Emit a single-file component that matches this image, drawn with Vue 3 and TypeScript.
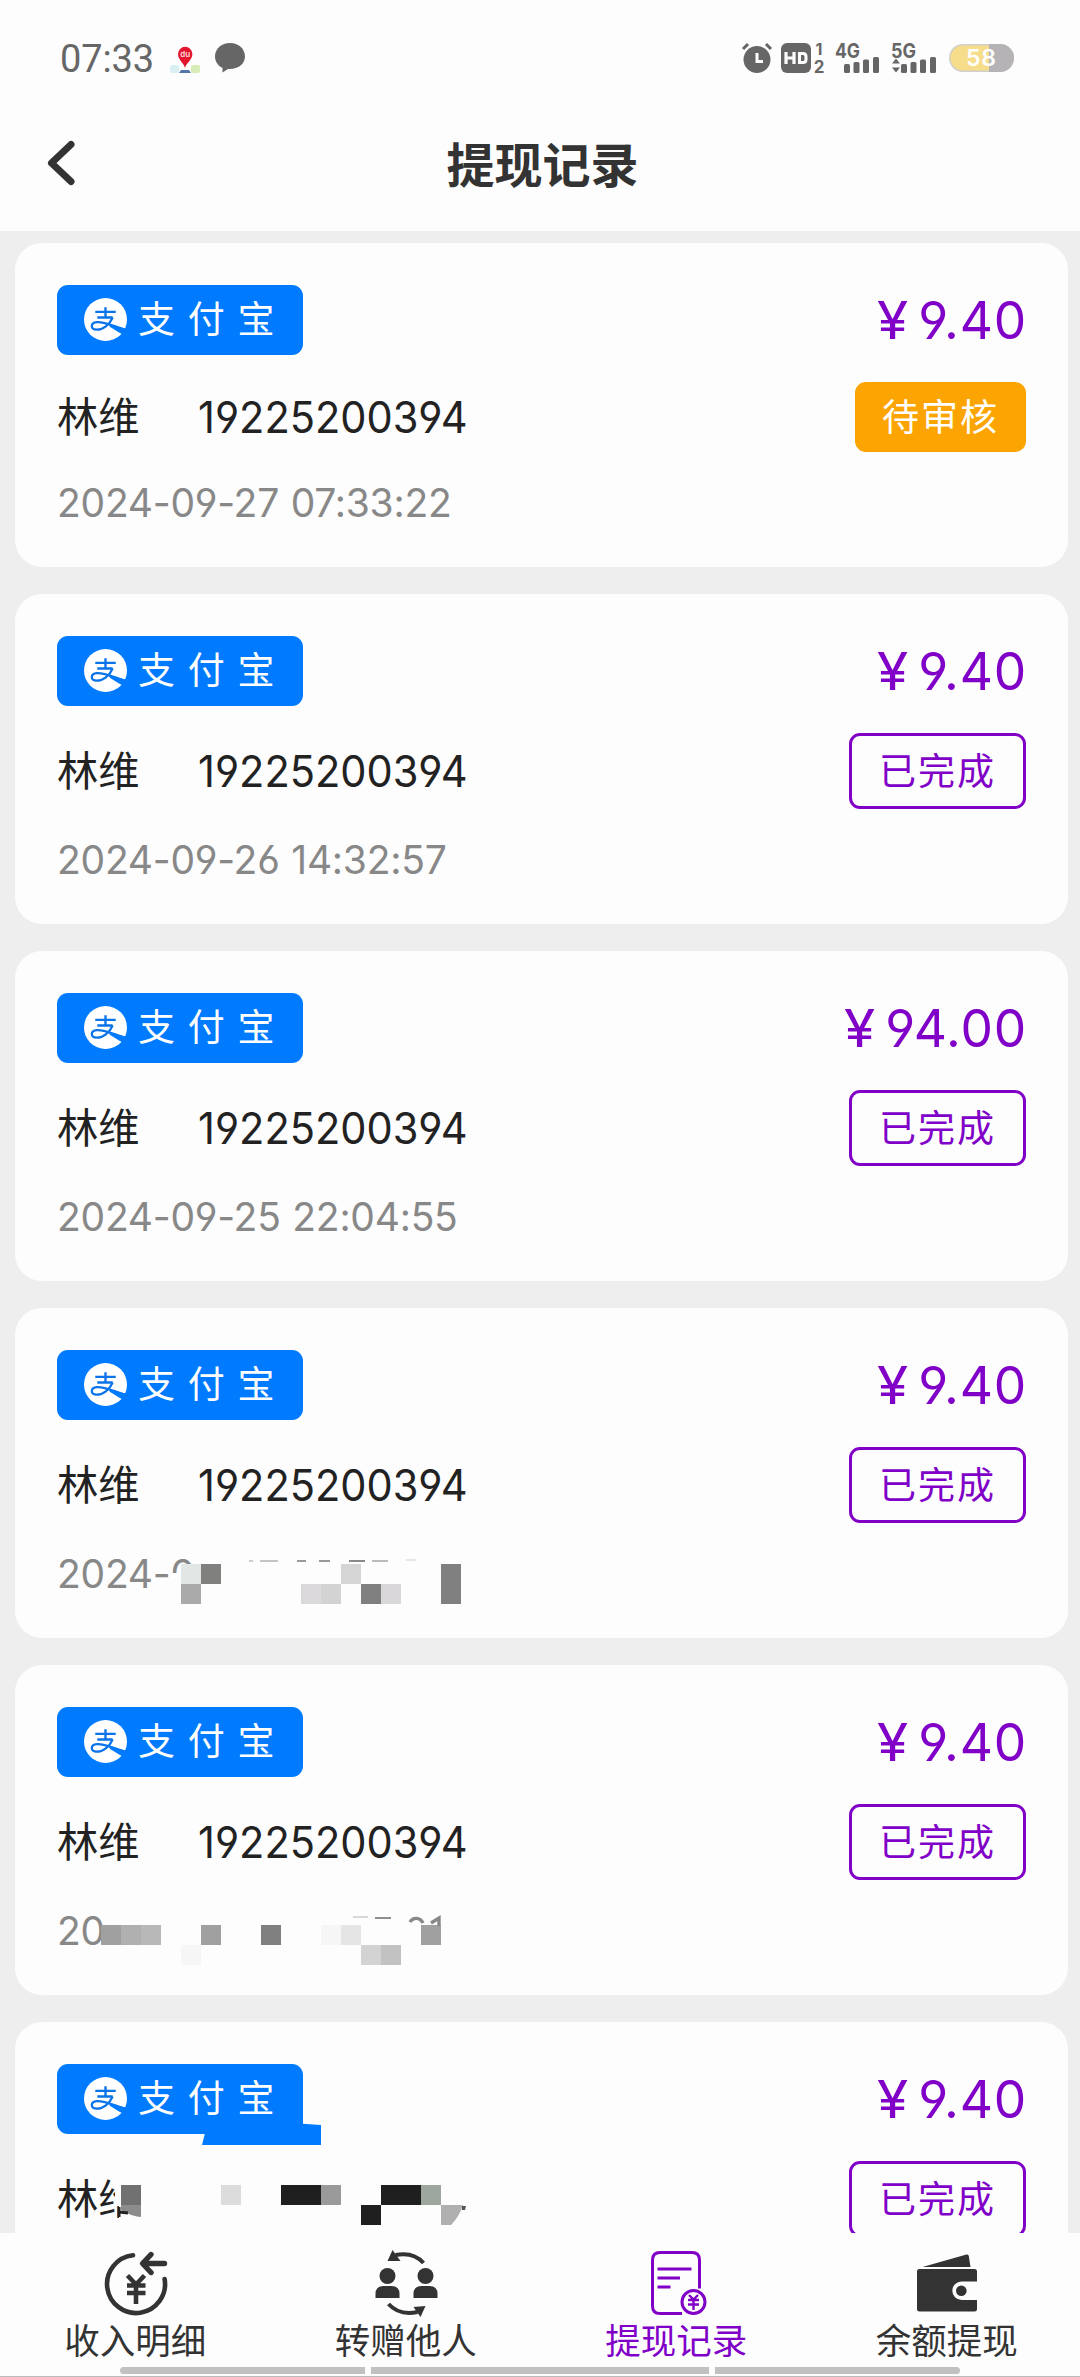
<script setup lang="ts">
type Block = { x: number; y: number; w?: number; h?: number; c: string }
interface RecordItem {
  id: number
  name: string
  account: string
  time: string
  amount: string
  done: boolean
}

const records: RecordItem[] = [
  { id: 1, name: '林维', account: '19225200394', time: '2024-09-27 07:33:22', amount: '9.40', done: false },
  { id: 2, name: '林维', account: '19225200394', time: '2024-09-26 14:32:57', amount: '9.40', done: true },
  { id: 3, name: '林维', account: '19225200394', time: '2024-09-25 22:04:55', amount: '94.00', done: true },
  { id: 4, name: '林维', account: '19225200394', time: '2024-0', amount: '9.40', done: true },
  { id: 5, name: '林维', account: '19225200394', time: '20', amount: '9.40', done: true },
  { id: 6, name: '林维', account: '', time: '', amount: '9.40', done: true },
]

// Privacy mosaics, in card coordinates
const mosaics: Record<number, Block[]> = {
  4: [
    { x: 156, y: 264, w: 40, h: 30, c: '#fdfdfd' },
    { x: 165, y: 255, w: 270, h: 45, c: '#fdfdfd' },
    { x: 165, y: 255, c: '#e2e7e6' }, { x: 185, y: 255, c: '#80817f' }, { x: 165, y: 275, c: '#aaaaaa' },
    { x: 325, y: 255, c: '#d5d5d5' }, { x: 285, y: 275, c: '#dbd9db' }, { x: 305, y: 275, c: '#d3d3d3' },
    { x: 345, y: 275, c: '#808080' }, { x: 365, y: 275, c: '#dad7da' }, { x: 425, y: 255, h: 40, c: '#808080' },
    { x: 233, y: 251, w: 4, h: 1.5, c: '#cccccc' }, { x: 244, y: 251, w: 18, h: 2, c: '#c4c4c4' },
    { x: 281, y: 251, w: 9, h: 2, c: '#999999' }, { x: 303, y: 251, w: 11, h: 2, c: '#999999' },
    { x: 333, y: 251, w: 16, h: 2, c: '#888888' }, { x: 356, y: 251, w: 16, h: 1.5, c: '#bbbbbb' },
    { x: 390, y: 250, w: 10, h: 1.5, c: '#e6e6e6' },
  ],
  5: [
    { x: 85, y: 259, c: '#a0a0a0' }, { x: 105, y: 259, c: '#b0b0b0' }, { x: 125, y: 259, c: '#b8b8b8' },
    { x: 185, y: 259, c: '#a0a0a0' }, { x: 245, y: 259, c: '#808080' }, { x: 305, y: 259, c: '#f6f6f6' },
    { x: 325, y: 259, c: '#e5e5e5' }, { x: 405, y: 259, c: '#a0a0a0' }, { x: 165, y: 279, c: '#f6f6f6' },
    { x: 345, y: 279, c: '#d3d3d3' }, { x: 365, y: 279, c: '#c2c2c2' },
    { x: 337, y: 250, w: 15, h: 1.5, c: '#d8d8d8' }, { x: 359, y: 251, w: 16, h: 2, c: '#909090' },
  ],
  6: [
    { x: 99, y: 155, w: 30, h: 28, c: '#fdfdfd' },
    { x: 103, y: 183, w: 26, h: 18, c: '#fdfdfd' },
    { x: 105, y: 162, c: '#717171' }, { x: 205, y: 162, c: '#dcdcdc' },
    { x: 265, y: 162, w: 40, c: '#1f1f1f' }, { x: 305, y: 162, c: '#9a9a9a' },
    { x: 345, y: 182, c: '#1f1f1f' }, { x: 365, y: 162, w: 40, c: '#1f1f1f' }, { x: 405, y: 162, c: '#9ea79e' },
  ],
}

const tabs = ['收入明细', '转赠他人', '提现记录', '余额提现']
</script>

<template>
  <div class="screen">
    <header>
      <div class="status">
        <span class="clock">07:33</span>
        <svg class="pin" width="32" height="32" viewBox="0 0 32 32">
          <rect x="1" y="23" width="9" height="8" rx="2" fill="#d9f0f3" />
          <rect x="22" y="23" width="9" height="8" rx="2" fill="#d8ecb8" />
          <path d="M12 28h8l2 3H10z" fill="#5577a8" />
          <path d="M16 26c-1-5-7-8-7-14a7.2 7.2 0 0 1 14.400 0c0 6-6.400 9-7.400 14z" fill="#e3152f" />
          <text x="16.200" y="14.500" text-anchor="middle" font-size="8" font-weight="700" fill="#ffc9cd">du</text>
        </svg>
        <svg class="bubble" width="32" height="32" viewBox="0 0 32 32">
          <path d="M16 1C7.500 1 1 6.800 1 14.500c0 5 3 9.200 7.500 11.500v4.500l5.500-3.500c9.500.8 17-4.800 17-12.500C31 6.800 24.500 1 16 1z" fill="#666" />
        </svg>
        <svg class="signals" width="276" height="34" viewBox="0 0 276 34">
          <g fill="#666">
            <circle cx="17" cy="18.500" r="13.500" />
            <path d="M3 8l5-5M31 8l-5-5" stroke="#666" stroke-width="3" />
            <path d="M17 12v8.500h6" stroke="#fdfdfd" stroke-width="3" fill="none" />
            <rect x="41" y="2" width="30" height="30" rx="6" />
            <path d="M46 11v12M54 11v12M46 17h8" stroke="#fdfdfd" stroke-width="3.200" fill="none" />
            <path d="M59.500 12.500h3.500q3 0 3 3v3q0 3-3 3h-3.500z" stroke="#fdfdfd" stroke-width="3" fill="none" />
            <text x="79" y="14" font-size="16" text-anchor="middle">1</text>
            <text x="79" y="32" font-size="17" text-anchor="middle">2</text>
            <text x="95" y="17" font-size="20" textLength="25" lengthAdjust="spacingAndGlyphs">4G</text>
            <rect x="104" y="23" width="6" height="9" rx="1.500" /><rect x="113.500" y="21" width="6" height="11" rx="1.500" />
            <rect x="123" y="18.500" width="6" height="13.500" rx="1.500" /><rect x="133" y="16" width="6" height="16" rx="1.500" />
            <text x="151" y="17" font-size="20" textLength="25" lengthAdjust="spacingAndGlyphs">5G</text>
            <path d="M152 22.500l4-5 4 5zM152 26.500l4 5 4-5z" />
            <rect x="161" y="23" width="6" height="9" rx="1.500" /><rect x="170.500" y="21" width="6" height="11" rx="1.500" />
            <rect x="180" y="18.500" width="6" height="13.500" rx="1.500" /><rect x="190" y="16" width="6" height="16" rx="1.500" />
          </g>
          <rect x="209" y="3" width="65" height="28" rx="14" fill="#d3cfca" />
          <path d="M249 3h11a14 14 0 0 1 0 28h-11z" fill="#b5b3b5" />
          <path d="M249 4.500H223a12.500 12.500 0 0 0 0 25h26z" fill="#f5dd8b" />
          <text x="241.500" y="25" font-size="23" font-weight="600" fill="#fff" text-anchor="middle" letter-spacing="1">58</text>
        </svg>
      </div>
      <div class="nav">
        <svg class="back" width="36" height="52" viewBox="0 0 36 52">
          <path d="M29 7.500L9.500 26 29 44.500" fill="none" stroke="#333" stroke-width="7" stroke-linecap="round" stroke-linejoin="round" />
        </svg>
        <h1>提现记录</h1>
      </div>
    </header>

    <main>
      <section v-for="r in records" :key="r.id" class="card">
        <div class="row top">
          <div class="alipay">
            <svg width="43" height="43" viewBox="0 0 42 42">
              <circle cx="21" cy="21" r="21" fill="#fff" />
              <path d="M11 13.500h20M21 9v11M13 19h15" stroke="#0a74e8" stroke-width="2.300" fill="none" />
              <path d="M28 19C25 26 18.500 31 12.500 31c-6.500 0-6.500-7 0-7.500 8-.5 16 4 29 8" stroke="#0a74e8" stroke-width="2.200" fill="none" />
              <path d="M26 26C31 28 36 29 42 30l-4.500 5.500C33 33 29 30 25 28z" fill="#007aff" />
            </svg>
            <span>支付宝</span>
          </div>
          <div class="amount num"><i>¥</i>{{ r.amount }}</div>
        </div>
        <div class="row">
          <div class="payee">
            <span>{{ r.name }}</span><span class="account num">{{ r.account }}</span>
          </div>
          <div class="state" :class="r.done ? 'done' : 'pending'">{{ r.done ? '已完成' : '待审核' }}</div>
        </div>
        <div class="time num">{{ r.time }}</div>

        <svg v-if="mosaics[r.id]" class="mosaic" width="500" height="330" viewBox="0 0 500 330" shape-rendering="crispEdges">
          <rect v-for="(b, i) in mosaics[r.id]" :key="i" :x="b.x" :y="b.y" :width="b.w ?? 20" :height="b.h ?? 20" :fill="b.c" />
          <g v-if="r.id === 5" shape-rendering="auto" fill="none" stroke="#888" stroke-width="3.400">
            <path d="M394 256c3-5 10-5 13 1M415 257l8-5v8" />
          </g>
          <g v-if="r.id === 6" shape-rendering="auto">
            <path d="M275 100l30 2v20H186l3-12h86z" fill="#007aff" />
            <path d="M105 182h20v12q-8 0-20-7z" fill="#8c8c8c" />
            <path d="M103 184v10M103 189l9 1" stroke="#222" stroke-width="3" />
            <path d="M425 182h22q-4 12-12 20h-10z" fill="#b0b0b0" />
            <path d="M446 183h4l-1 4h-3z" fill="#555" />
          </g>
        </svg>
      </section>
    </main>

    <nav class="tabs">
      <div v-for="(t, i) in tabs" :key="t" class="tab" :class="{ active: i === 2 }">
        <svg v-if="i === 0" width="68" height="68" viewBox="0 0 68 68" fill="none" stroke="#333" stroke-linecap="round">
          <path d="M32 5.200A29 29 0 1 0 63.600 29" stroke-width="4.600" />
          <path d="M63.500 13.500H42M50 4.500L41.500 13.500l8.500 9" stroke-width="5.400" stroke-linejoin="round" />
          <path d="M26.500 25.500l8.500 9 8.500-9M35 34.500v19.500M26 35.500h18.500M26 43h18.500" stroke-width="4.600" stroke-linecap="butt" />
        </svg>
        <svg v-else-if="i === 1" width="68" height="68" viewBox="1.5 0 68 68" fill="#333">
          <circle cx="17" cy="26" r="8" /><circle cx="55" cy="26" r="8" />
          <path d="M5 48v-4q0-8 8-8h8q8 0 8 8v4zM43 48v-4q0-8 8-8h8q8 0 8 8v4z" />
          <path d="M53 13Q43 1.500 25 5" fill="none" stroke="#333" stroke-width="4" />
          <path d="M17 11L22 0l8 11zM55 56l-5 11-7-10z" />
          <path d="M18 54Q29 66 47 62" fill="none" stroke="#333" stroke-width="4" />
        </svg>
        <svg v-else-if="i === 2" width="68" height="68" viewBox="0 0 68 68" fill="none" stroke="#8000c8" stroke-width="3">
          <path d="M40 63.500H18q-7.500 0-7.500-7.500V10q0-7.500 7.500-7.500h32q7.500 0 7.500 7.500v28.500" />
          <path d="M15.500 19h34M15.500 28H38M15.500 37h13" stroke-width="3.200" />
          <circle cx="51.500" cy="52" r="11.500" />
          <path d="M47 45l4.500 4.500L56 45M51.500 49v11M46 50h11M46 54.500h11" stroke-width="2.400" />
        </svg>
        <svg v-else width="68" height="68" viewBox="2.5 0 68 68" fill="#333">
          <path d="M12 17L56 4.500q2-.5 2.300 1.500L60 17z" />
          <path d="M9 19h55q2.500 0 2.500 2.500V31.500H51a9.200 9.200 0 0 0 0 18.400h15.500v9.100q0 2.500-2.500 2.500H9q-2.500 0-2.500-2.500V21.500Q6.500 19 9 19z" />
          <circle cx="50.800" cy="40.700" r="5.300" />
        </svg>
        <span>{{ t }}</span>
      </div>
      <div class="scrollbar"><i class="a"></i><i class="b"></i><i class="c"></i></div>
    </nav>
  </div>
</template>

<style>
body { margin: 0; background: #eee; }
</style>

<style scoped>
.screen {
  width: 1080px; height: 2377px; overflow: hidden; display: flex; flex-direction: column;
  background: #eee; color: #222; font-family: Inter, "Noto Sans CJK SC", sans-serif;
}
header { height: 231px; flex: none; background: #fdfdfd; }
.status { display: flex; align-items: center; height: 64px; padding: 26px 64px 0 60px; }
.clock { width: 109px; font: 400 38px/40px Roboto, sans-serif; color: #666; letter-spacing: -0.1px; margin-top: 1px; }
.pin { margin-left: 0; }
.bubble { margin-left: 13px; }
.signals { margin-left: auto; font-family: Inter, sans-serif; font-weight: 700; overflow: visible; }
.nav { display: flex; justify-content: center; align-items: center; height: 144px; position: relative; }
.back { position: absolute; left: 42px; top: 47px; }
h1 { margin: 0 0 0 5px; font: 700 48px/60px "Noto Sans CJK SC", sans-serif; color: #333; }

main { flex: 1; min-height: 0; overflow: hidden; padding: 12px 12px 0 15px; display: flex; flex-direction: column; gap: 27px; }
.card { flex: none; position: relative; box-sizing: border-box; padding: 42px; border-radius: 27px; background: #fdfdfd; }
.row { display: flex; justify-content: space-between; align-items: center; margin-bottom: 27px; }
.alipay {
  display: flex; align-items: center; height: 70px; padding: 0 27px; border-radius: 11px;
  background: #007aff; color: #fff; width: 246px; box-sizing: border-box; white-space: nowrap;
}
.alipay svg { flex: none; margin-bottom: 2px; }
.alipay span { font-size: 37px; line-height: 52px; letter-spacing: 12.700px; margin-left: 11px; }
.num { font-family: Inter, sans-serif; font-weight: 400; font-feature-settings: "cv03", "cv04"; white-space: pre; }
.amount { font-size: 51.500px; line-height: 61px; color: #8000c8; letter-spacing: 0.8px; margin-right: -1px; }
.amount i { display: inline-block; font-style: normal; margin-right: 9px; transform: scaleX(1.1); transform-origin: right; }
.payee { display: flex; align-items: center; font-size: 41.300px; line-height: 60px; }
.account { font-size: 44px; margin-left: 58px; transform: scaleX(0.944); transform-origin: left; }
.state { box-sizing: border-box; height: 70px; padding: 0 27px; border-radius: 11px; font-size: 37px; line-height: 72px; letter-spacing: 2px; }
.pending { background: #fca402; color: #fff; }
.done { height: 76px; border: 3px solid #8000c8; color: #8000c8; }
.time { height: 46px; line-height: 47px; font-size: 39px; color: #888; letter-spacing: -0.25px; word-spacing: 1px; }
.mosaic { position: absolute; left: 0.5px; top: 0.5px; }

.tabs { flex: none; position: relative; height: 144px; background: #fdfdfd; display: grid; grid-template-columns: repeat(4, 270.500px); color: #333; }
.tab { display: flex; flex-direction: column; align-items: center; padding-top: 17px; box-sizing: border-box; }
.tab svg { flex: none; }
.tab span { font: 400 35.500px/44px "Noto Sans CJK SC", sans-serif; margin-top: -1px; }
.active { color: #8000c8; }
.scrollbar { position: absolute; left: 0; right: 0; bottom: 0; height: 10px; padding-left: 120px; display: flex; gap: 6px; border-bottom: 1px solid #bbb; box-sizing: border-box; }
.scrollbar i { height: 7px; background: #c1c1c1; }
.a { width: 245px; border-radius: 4px 0 0 4px; }
.b { width: 338px; }
.c { width: 245px; border-radius: 0 4px 4px 0; }
</style>
